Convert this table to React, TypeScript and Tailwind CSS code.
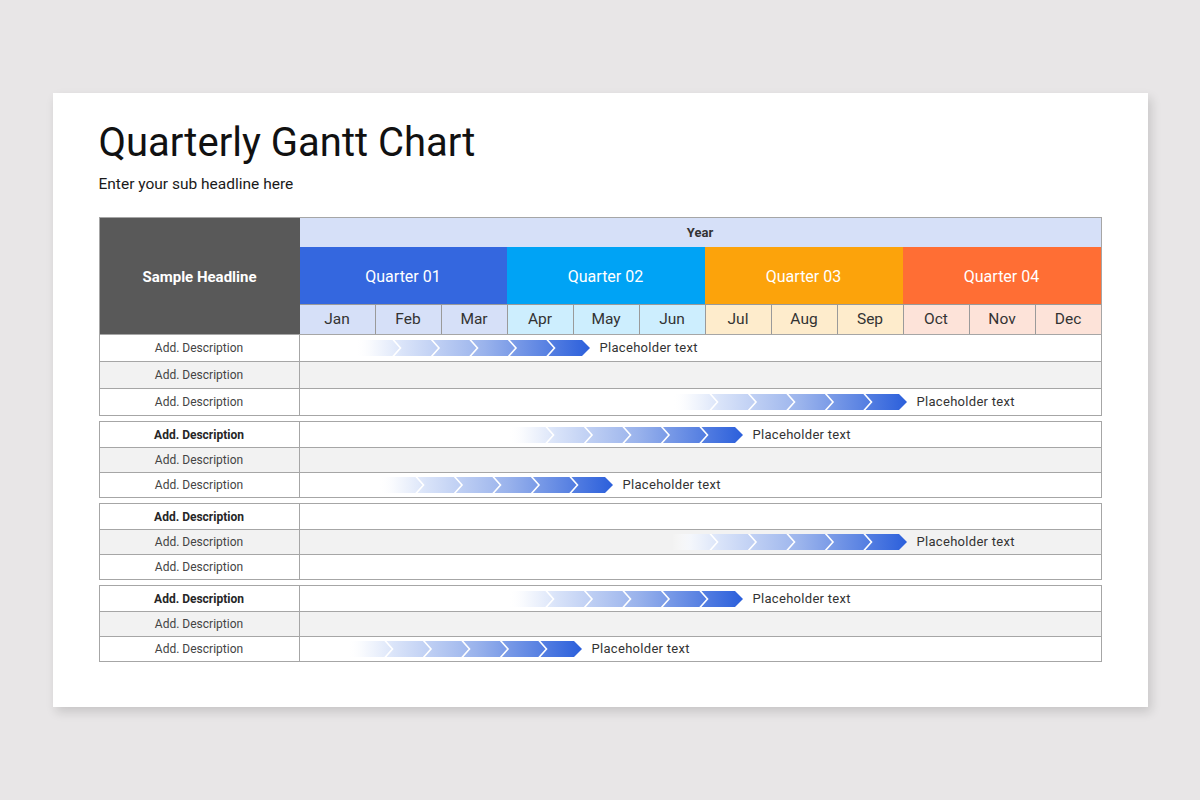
import React from 'react'

const months = [
  { name: 'Jan', bg: 'bg-[#d6e0f8]' },
  { name: 'Feb', bg: 'bg-[#d6e0f8]' },
  { name: 'Mar', bg: 'bg-[#d6e0f8]' },
  { name: 'Apr', bg: 'bg-[#cdeefe]' },
  { name: 'May', bg: 'bg-[#cdeefe]' },
  { name: 'Jun', bg: 'bg-[#cdeefe]' },
  { name: 'Jul', bg: 'bg-[#feeccc]' },
  { name: 'Aug', bg: 'bg-[#feeccc]' },
  { name: 'Sep', bg: 'bg-[#feeccc]' },
  { name: 'Oct', bg: 'bg-[#fde3d9]' },
  { name: 'Nov', bg: 'bg-[#fde3d9]' },
  { name: 'Dec', bg: 'bg-[#fde3d9]' },
]

const quarters = [
  { name: 'Quarter 01', bg: 'bg-[#3467df]' },
  { name: 'Quarter 02', bg: 'bg-[#00a3f5]' },
  { name: 'Quarter 03', bg: 'bg-[#fca30b]' },
  { name: 'Quarter 04', bg: 'bg-[#ff6e34]' },
]

// offset of each bar from the start of the timeline, null = empty row
const groups: (number | null)[][] = [
  [55, null, 372],
  [208, null, 78],
  [null, 372, null],
  [208, null, 47],
]

const Arrow = ({ id }: { id: string }) => {
  const chevrons = [38.5, 77, 115.5, 154, 192.5]
  return (
    <svg width="235" height="16" viewBox="0 0 235 16" className="shrink-0">
      <defs>
        <linearGradient id={id} x1="0" y1="0" x2="1" y2="0">
          <stop offset="0" stopColor="#ffffff" stopOpacity="0" />
          <stop offset="0.08" stopColor="#f4f7fd" stopOpacity="0.9" />
          <stop offset="0.2" stopColor="#dae4f9" />
          <stop offset="0.55" stopColor="#9ab3ec" />
          <stop offset="1" stopColor="#2b5fdb" />
        </linearGradient>
      </defs>
      <polygon points="0,0 227,0 235,8 227,16 0,16" fill={`url(#${id})`} />
      {chevrons.map((x) => (
        <polyline
          key={x}
          points={`${x - 1},-1 ${x + 7},8 ${x - 1},17`}
          fill="none"
          stroke="#ffffff"
          strokeWidth="1.6"
        />
      ))}
    </svg>
  )
}

const Row = ({
  bar,
  gray,
  bold,
  first,
  tall,
  id,
}: {
  bar: number | null
  gray: boolean
  bold: boolean
  first: boolean
  tall: boolean
  id: string
}) => (
  <div
    className={`flex ${tall ? 'h-[27px]' : 'h-[25px]'} ${first && !tall ? '' : 'border-t border-[#a6a6a6]'} ${gray ? 'bg-[#f2f2f2]' : 'bg-white'}`}
  >
    <div
      className={`w-[200px] shrink-0 border-r border-[#a6a6a6] flex items-center justify-center text-[12px] ${bold ? 'font-bold text-[#262626]' : 'text-[#444]'}`}
    >
      Add. Description
    </div>
    <div className="flex-1 flex items-center">
      {bar !== null && (
        <div className="flex items-center" style={{ paddingLeft: bar }}>
          <Arrow id={id} />
          <span className="ml-[10px] text-[13px] tracking-[0.3px] text-[#333]">
            Placeholder text
          </span>
        </div>
      )}
    </div>
  </div>
)

export default function App() {
  return (
    <div className="min-h-[800px] w-full bg-[#e8e6e7] flex items-center justify-center font-['Roboto',sans-serif]">
      <div className="w-[1095px] h-[614px] bg-white shadow-[3px_5px_10px_rgba(0,0,0,0.14)] pl-[46px] pt-[30px]">
        <h1 className="text-[40px] leading-[40px] text-[#111]">Quarterly Gantt Chart</h1>
        <p className="mt-[11px] text-[15.5px] leading-[20px] text-[#1a1a1a]">
          Enter your sub headline here
        </p>

        <div className="mt-[23px] w-[1003px]">
          <div className="border border-[#a6a6a6]">
            <div className="flex h-[116px]">
              <div className="w-[200px] shrink-0 bg-[#595959] flex items-center justify-center text-white font-bold text-[15px] pt-[2px]">
                Sample Headline
              </div>
              <div className="flex-1 grid grid-cols-[75px_repeat(11,66px)] grid-rows-[29px_57px_30px]">
                <div className="col-span-12 bg-[#d6e0f8] flex items-center justify-center font-bold text-[13px] text-[#333]">
                  Year
                </div>
                {quarters.map((q) => (
                  <div
                    key={q.name}
                    className={`col-span-3 ${q.bg} flex items-center justify-center text-white text-[16px] pt-[3px]`}
                  >
                    {q.name}
                  </div>
                ))}
                {months.map((m, i) => (
                  <div
                    key={m.name}
                    className={`${m.bg} border-t border-[#9a9a9a] ${i > 0 ? 'border-l' : ''} flex items-center justify-center text-[15.5px] text-[#333] pt-[1px]`}
                  >
                    {m.name}
                  </div>
                ))}
              </div>
            </div>
            {groups[0].map((bar, r) => (
              <Row
                key={r}
                id={`g0r${r}`}
                bar={bar}
                gray={r === 1}
                bold={false}
                first={r === 0}
                tall
              />
            ))}
          </div>

          {groups.slice(1).map((rows, g) => (
            <div key={g} className="mt-[5px] border border-[#a6a6a6]">
              {rows.map((bar, r) => (
                <Row
                  key={r}
                  id={`g${g + 1}r${r}`}
                  bar={bar}
                  gray={r === 1}
                  bold={r === 0}
                  first={r === 0}
                  tall={false}
                />
              ))}
            </div>
          ))}
        </div>
      </div>
    </div>
  )
}
